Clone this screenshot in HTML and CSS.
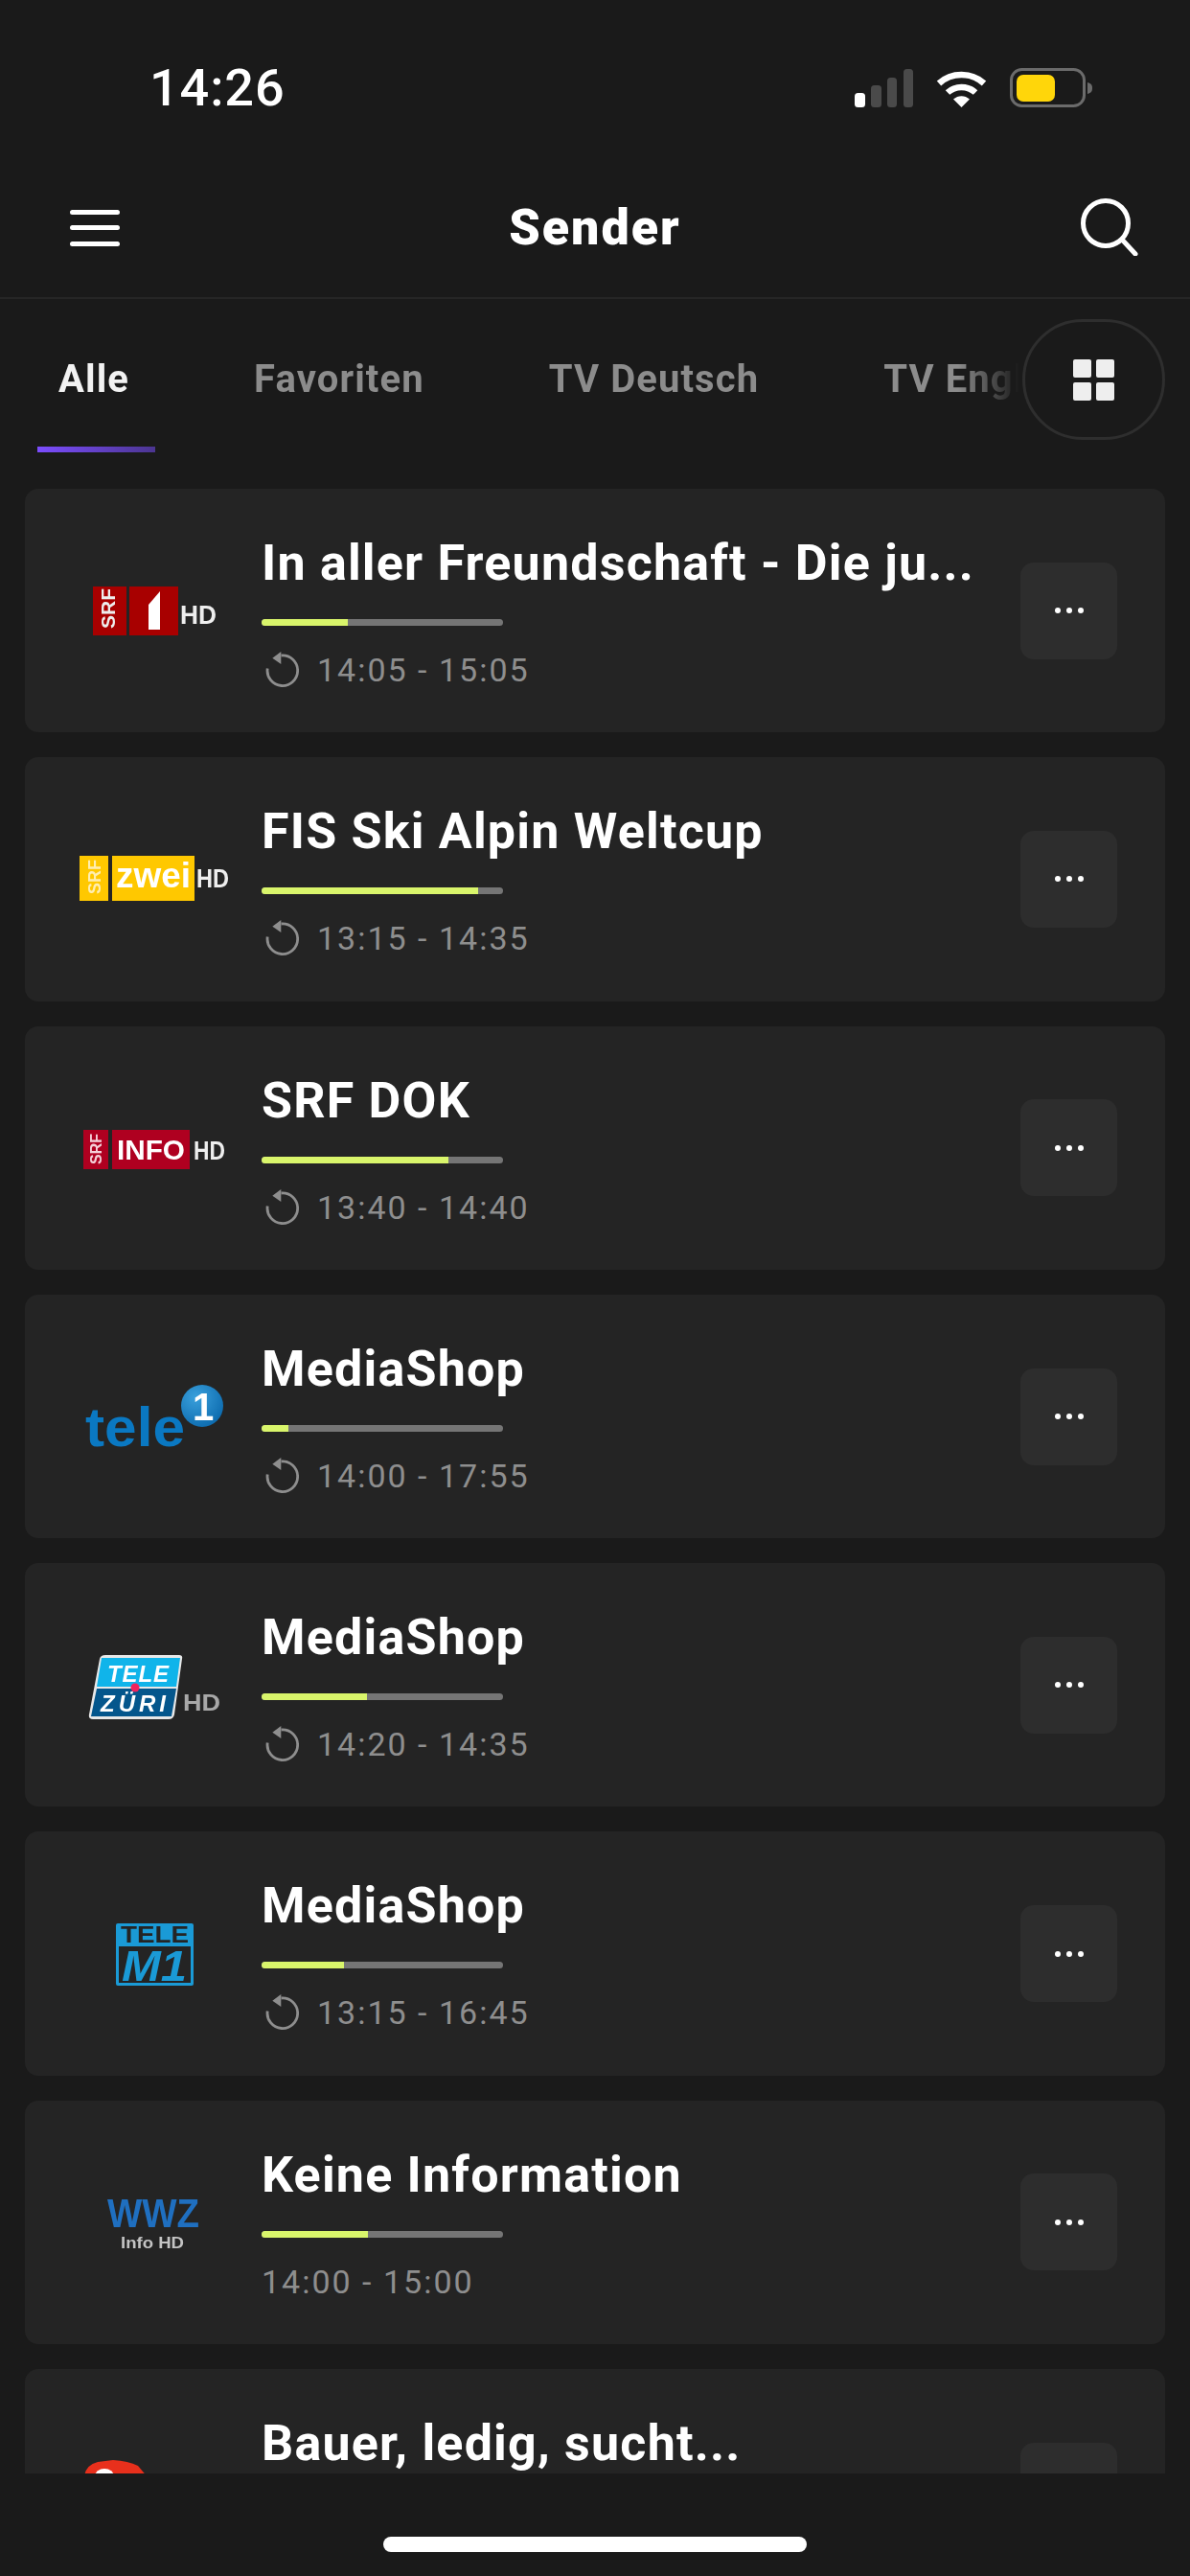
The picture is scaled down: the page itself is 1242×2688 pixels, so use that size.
FILE: index.html
```html
<!DOCTYPE html>
<html lang="de">
<head>
<meta charset="utf-8">
<title>Sender</title>
<link rel="stylesheet" href="styles.css">
</head>
<body>
<div class="app">
  <div class="status">
    <span class="clock">14:26</span>
    <div class="status-icons">
      <svg class="sig" width="61" height="40" viewBox="0 0 61 40"><rect x="0" y="25" width="11" height="15" rx="3.5" fill="#fff"/><rect x="17" y="17" width="11" height="23" rx="3.5" fill="#4a4a4a"/><rect x="34" y="9" width="10" height="31" rx="3.5" fill="#4a4a4a"/><rect x="51" y="0" width="10" height="40" rx="3.5" fill="#4a4a4a"/></svg>
      <svg class="wifi" width="53" height="40" viewBox="0 0 53 40"><path d="M3 15 C16 3 37 3 50 15" fill="none" stroke="#fff" stroke-width="6.5"/><path d="M12 24.5 C20 17 33 17 41 24.5" fill="none" stroke="#fff" stroke-width="6.5"/><path d="M18 31.5 C23 27 30 27 35 31.5 L26.5 40 Z" fill="#fff"/></svg>
      <svg class="batt" width="87" height="42" viewBox="0 0 87 42"><rect x="1.5" y="1.5" width="76" height="38" rx="11" fill="none" stroke="#6b6b6b" stroke-width="3"/><rect x="7" y="7" width="40" height="28" rx="7" fill="#ffd60a"/><path d="M81 15 C85 16 86 18 86 21 C86 24 85 26 81 27 Z" fill="#6b6b6b"/></svg>
    </div>
  </div>

  <header class="topbar">
    <svg class="menu" width="52" height="38" viewBox="0 0 52 38"><rect y="0" width="52" height="5" rx="2.5" fill="#fff"/><rect y="16" width="52" height="5" rx="2.5" fill="#fff"/><rect y="33" width="52" height="5" rx="2.5" fill="#fff"/></svg>
    <h1 class="title">Sender</h1>
    <svg class="search" width="60" height="60" viewBox="0 0 60 60"><circle cx="26" cy="26" r="23.5" fill="none" stroke="#fff" stroke-width="5"/><path d="M44 44 L57 58" stroke="#fff" stroke-width="5" stroke-linecap="round"/></svg>
  </header>

  <nav class="tabs-wrap">
    <div class="tabs">
      <span class="tab tab-active">Alle</span>
      <span class="tab">Favoriten</span>
      <span class="tab">TV Deutsch</span>
      <span class="tab">TV Englisch</span>
    </div>
    <button class="grid-btn" aria-label="Ansicht">
      <svg width="43" height="43" viewBox="0 0 43 43"><rect width="19" height="19" rx="2" fill="#eee"/><rect x="24" width="19" height="19" rx="2" fill="#eee"/><rect y="24" width="19" height="19" rx="2" fill="#eee"/><rect x="24" y="24" width="19" height="19" rx="2" fill="#eee"/></svg>
    </button>
  </nav>

  <main class="list">

    <article class="card">
      <svg class="logo" width="247" height="254" viewBox="0 0 247 254">
        <rect x="71" y="102" width="35" height="51" fill="#a80000"/><rect x="109" y="102" width="51" height="51" fill="#a80000"/>
        <text class="lg-b" transform="translate(94 146) rotate(-90)" font-size="21" fill="#eee">SRF</text>
        <path d="M129 121 L141 107 V147 H129 Z" fill="#fff"/>
        <text class="lg-b" x="162" y="141" font-size="27" textLength="38" lengthAdjust="spacingAndGlyphs" fill="#eee">HD</text>
      </svg>
      <div class="info">
        <h2 class="show">In aller Freundschaft - Die ju...</h2>
        <div class="bar"><div class="fill" style="width:35.8%"></div></div>
        <div class="time">
          <svg class="replay" width="36" height="40" viewBox="0 0 36 40"><path d="M17.5 5 A15.8 15.8 0 1 1 3.2 18.5" fill="none" stroke="#8e8e8e" stroke-width="2.8"/><path d="M8.3 7.7 L17.3 1 V14 Z" fill="#8e8e8e"/></svg>
          <span>14:05 - 15:05</span>
        </div>
      </div>
      <button class="more" aria-label="Mehr"><i></i><i></i><i></i></button>
    </article>

    <article class="card">
      <svg class="logo" width="247" height="254" viewBox="0 0 247 254">
        <rect x="57" y="103" width="30" height="47" fill="#ffc800"/><rect x="91" y="103" width="86" height="47" fill="#ffc800"/>
        <text class="lg-b" transform="translate(79 143) rotate(-90)" font-size="18" fill="#ffeeb0">SRF</text>
        <text class="lg-b" x="95" y="136" font-size="36" textLength="78" lengthAdjust="spacingAndGlyphs" fill="#fff">zwei</text>
        <text class="lg-b" x="179" y="136" font-size="27" textLength="34" lengthAdjust="spacingAndGlyphs" fill="#eee">HD</text>
      </svg>
      <div class="info">
        <h2 class="show">FIS Ski Alpin Weltcup</h2>
        <div class="bar"><div class="fill" style="width:89.5%"></div></div>
        <div class="time">
          <svg class="replay" width="36" height="40" viewBox="0 0 36 40"><path d="M17.5 5 A15.8 15.8 0 1 1 3.2 18.5" fill="none" stroke="#8e8e8e" stroke-width="2.8"/><path d="M8.3 7.7 L17.3 1 V14 Z" fill="#8e8e8e"/></svg>
          <span>13:15 - 14:35</span>
        </div>
      </div>
      <button class="more" aria-label="Mehr"><i></i><i></i><i></i></button>
    </article>

    <article class="card">
      <svg class="logo" width="247" height="254" viewBox="0 0 247 254">
        <rect x="61" y="108" width="26" height="41" fill="#af0020"/><rect x="91" y="108" width="81" height="41" fill="#af0020"/>
        <text class="lg-b" transform="translate(80 144) rotate(-90)" font-size="16" fill="#f4d0d8">SRF</text>
        <text class="lg-b" x="96" y="139" font-size="30" textLength="71" lengthAdjust="spacingAndGlyphs" fill="#fff">INFO</text>
        <text class="lg-b" x="176" y="139" font-size="28" textLength="33" lengthAdjust="spacingAndGlyphs" fill="#eee">HD</text>
      </svg>
      <div class="info">
        <h2 class="show">SRF DOK</h2>
        <div class="bar"><div class="fill" style="width:77.5%"></div></div>
        <div class="time">
          <svg class="replay" width="36" height="40" viewBox="0 0 36 40"><path d="M17.5 5 A15.8 15.8 0 1 1 3.2 18.5" fill="none" stroke="#8e8e8e" stroke-width="2.8"/><path d="M8.3 7.7 L17.3 1 V14 Z" fill="#8e8e8e"/></svg>
          <span>13:40 - 14:40</span>
        </div>
      </div>
      <button class="more" aria-label="Mehr"><i></i><i></i><i></i></button>
    </article>

    <article class="card">
      <svg class="logo" width="247" height="254" viewBox="0 0 247 254">
        <defs><radialGradient id="ball" cx="0.35" cy="0.3" r="0.8"><stop offset="0" stop-color="#3aa0dc"/><stop offset="1" stop-color="#0a68ac"/></radialGradient></defs>
        <text class="lg-b" x="63" y="158" font-size="58" textLength="104" lengthAdjust="spacingAndGlyphs" fill="#0a78c2">tele</text>
        <ellipse cx="185" cy="116" rx="22" ry="22" fill="url(#ball)"/>
        <text class="lg-b" x="175" y="131" font-size="40" fill="#fff">1</text>
      </svg>
      <div class="info">
        <h2 class="show">MediaShop</h2>
        <div class="bar"><div class="fill" style="width:11%"></div></div>
        <div class="time">
          <svg class="replay" width="36" height="40" viewBox="0 0 36 40"><path d="M17.5 5 A15.8 15.8 0 1 1 3.2 18.5" fill="none" stroke="#8e8e8e" stroke-width="2.8"/><path d="M8.3 7.7 L17.3 1 V14 Z" fill="#8e8e8e"/></svg>
          <span>14:00 - 17:55</span>
        </div>
      </div>
      <button class="more" aria-label="Mehr"><i></i><i></i><i></i></button>
    </article>

    <article class="card">
      <svg class="logo" width="247" height="254" viewBox="0 0 247 254">
        <path d="M78 100 Q79 96 84 96 H161 Q165 96 164 100 L156 158 Q155 163 150 163 H71 Q66 163 67 158 Z" fill="#e8e8e8"/>
        <path d="M80 99 H162 L158 129 H75 Z" fill="#10b4ea"/>
        <path d="M75 131 H158 L153 160 H69 Z" fill="#04568c"/>
        <circle cx="115" cy="130" r="4.5" fill="#f0245c"/>
        <text class="lg-bi" x="86" y="124" font-size="24" textLength="64" lengthAdjust="spacing" fill="#fff">TELE</text>
        <text class="lg-bi" x="79" y="155" font-size="24" textLength="68" lengthAdjust="spacing" fill="#fff">ZÜRI</text>
        <text class="lg-b" x="165" y="154" font-size="24" textLength="39" lengthAdjust="spacingAndGlyphs" fill="#a8a8a8">HD</text>
      </svg>
      <div class="info">
        <h2 class="show">MediaShop</h2>
        <div class="bar"><div class="fill" style="width:43.5%"></div></div>
        <div class="time">
          <svg class="replay" width="36" height="40" viewBox="0 0 36 40"><path d="M17.5 5 A15.8 15.8 0 1 1 3.2 18.5" fill="none" stroke="#8e8e8e" stroke-width="2.8"/><path d="M8.3 7.7 L17.3 1 V14 Z" fill="#8e8e8e"/></svg>
          <span>14:20 - 14:35</span>
        </div>
      </div>
      <button class="more" aria-label="Mehr"><i></i><i></i><i></i></button>
    </article>

    <article class="card">
      <svg class="logo" width="247" height="254" viewBox="0 0 247 254">
        <rect x="95" y="96" width="81" height="65" rx="2" fill="#1a9ad6"/>
        <rect x="98" y="120" width="75" height="38" fill="#242424"/>
        <text class="lg-b" x="100" y="116" font-size="23" textLength="71" lengthAdjust="spacingAndGlyphs" fill="#242424">TELE</text>
        <text class="lg-bi" x="101" y="156" font-size="44" textLength="68" lengthAdjust="spacingAndGlyphs" fill="#1a9ad6">M1</text>
      </svg>
      <div class="info">
        <h2 class="show">MediaShop</h2>
        <div class="bar"><div class="fill" style="width:34%"></div></div>
        <div class="time">
          <svg class="replay" width="36" height="40" viewBox="0 0 36 40"><path d="M17.5 5 A15.8 15.8 0 1 1 3.2 18.5" fill="none" stroke="#8e8e8e" stroke-width="2.8"/><path d="M8.3 7.7 L17.3 1 V14 Z" fill="#8e8e8e"/></svg>
          <span>13:15 - 16:45</span>
        </div>
      </div>
      <button class="more" aria-label="Mehr"><i></i><i></i><i></i></button>
    </article>

    <article class="card">
      <svg class="logo" width="247" height="254" viewBox="0 0 247 254">
        <text class="lg-b" x="86" y="132" font-size="42" textLength="96" lengthAdjust="spacingAndGlyphs" fill="#1f6fc0">WWZ</text>
        <text class="lg-b" x="100" y="154" font-size="16" textLength="66" lengthAdjust="spacingAndGlyphs" fill="#c4c4c4">Info HD</text>
      </svg>
      <div class="info">
        <h2 class="show">Keine Information</h2>
        <div class="bar"><div class="fill" style="width:44%"></div></div>
        <div class="time"><span class="time-plain">14:00 - 15:00</span></div>
      </div>
      <button class="more" aria-label="Mehr"><i></i><i></i><i></i></button>
    </article>

    <article class="card">
      <svg class="logo" width="247" height="254" viewBox="0 0 247 254">
        <path d="M62 111 Q64 100 76 97 L92 95 Q108 96 118 101 L134 120 H62 Z" fill="#e8301c"/>
        <ellipse cx="83" cy="112" rx="10" ry="8" fill="#fff"/>
        <text class="lg-b" x="142" y="131" font-size="28" fill="#9a9a9a">HD</text>
      </svg>
      <div class="info">
        <h2 class="show">Bauer, ledig, sucht...</h2>
        <div class="bar"><div class="fill" style="width:50%"></div></div>
        <div class="time">
          <svg class="replay" width="36" height="40" viewBox="0 0 36 40"><path d="M17.5 5 A15.8 15.8 0 1 1 3.2 18.5" fill="none" stroke="#8e8e8e" stroke-width="2.8"/><path d="M8.3 7.7 L17.3 1 V14 Z" fill="#8e8e8e"/></svg>
          <span>14:00 - 15:00</span>
        </div>
      </div>
      <button class="more" aria-label="Mehr"><i></i><i></i><i></i></button>
    </article>

  </main>

  <footer class="home"><div class="home-pill"></div></footer>
</div>
</body>
</html>
```
FILE: styles.css
```css
* { box-sizing: border-box; }
html, body { margin: 0; padding: 0; background: #1a1a1a; }
body { font-family: Roboto, "Liberation Sans", sans-serif; color: #fff; }
.app { width: 1242px; height: 2688px; display: flex; flex-direction: column; overflow: hidden; background: #1a1a1a; }

.status { height: 168px; display: flex; justify-content: space-between; align-items: flex-start; padding: 62px 101px 0 156px; flex: none; }
.clock { font-size: 54px; line-height: 60px; font-weight: 500; letter-spacing: 0.9px; }
.status-icons { display: flex; align-items: flex-start; margin-top: 10px; }
.wifi { margin-left: 24px; }
.batt { margin-left: 24px; margin-top: -1px; }

.topbar { height: 144px; flex: none; display: flex; align-items: center; justify-content: space-between; padding: 0 54px 0 73px; border-bottom: 2px solid #262626; position: relative; }
.menu { margin-top: -2px; }
.title { margin: 0; font-size: 52px; line-height: 60px; font-weight: 900; letter-spacing: 2px; position: absolute; left: 0; right: 0; top: 40px; text-align: center; }
.search { margin-top: -4px; }

.tabs-wrap { height: 198px; flex: none; position: relative; }
.tabs { display: flex; gap: 81px; padding: 60px 0 0 39px; width: 1067px; overflow: hidden; white-space: nowrap; -webkit-mask-image: linear-gradient(to right, #000 1000px, transparent 1064px); mask-image: linear-gradient(to right, #000 1000px, transparent 1064px); }
.tab { flex: none; font-size: 40px; line-height: 48px; font-weight: 700; letter-spacing: 1.1px; color: #8c8c8c; padding: 0 27px 46px 22px; border-bottom: 6px solid transparent; }
.tab-active { color: #f2f2f2; border-image: linear-gradient(to right, #7c4dff, #4b3590) 1; }
.grid-btn { position: absolute; left: 1067px; top: 21px; width: 149px; height: 126px; padding: 0; border-radius: 63px; border: 3px solid #2e2e2e; background: #1a1a1a; display: flex; align-items: center; justify-content: center; }

.list { flex: 1; min-height: 0; overflow: hidden; display: flex; flex-direction: column; gap: 26px; padding: 0 26px; }
.card { flex: none; height: 254.3px; background: #242424; border-radius: 14px; display: flex; align-items: stretch; }
.logo { flex: none; filter: blur(0.7px); }
.lg-b { font-family: "Liberation Sans", sans-serif; font-weight: 700; }
.lg-bi { font-family: "Liberation Sans", sans-serif; font-weight: 700; font-style: italic; }

.info { flex: 1; min-width: 0; padding-top: 48px; }
.show { margin: 0; font-size: 52px; line-height: 60px; font-weight: 700; white-space: nowrap; letter-spacing: 1.2px; }
.bar { width: 252px; height: 7px; margin-top: 28px; background: #757575; border-radius: 3.5px; overflow: hidden; }
.fill { height: 100%; background: #d9f56b; }
.time { display: flex; align-items: center; margin-top: 26px; height: 40px; font-size: 34px; color: #8e8e8e; letter-spacing: 2px; }
.replay { margin: 0 19px 0 3px; flex: none; }
.more { flex: none; width: 101px; height: 101px; align-self: center; margin-right: 50px; padding: 0; border: 0; border-radius: 14px; background: #2d2d2d; display: flex; align-items: center; justify-content: center; gap: 6px; }
.more i { width: 6px; height: 6px; border-radius: 50%; background: #fff; }

.home { height: 107px; flex: none; display: flex; justify-content: center; padding-top: 66px; background: #1a1a1a; }
.home-pill { width: 442px; height: 16px; border-radius: 8px; background: #fff; }
```
